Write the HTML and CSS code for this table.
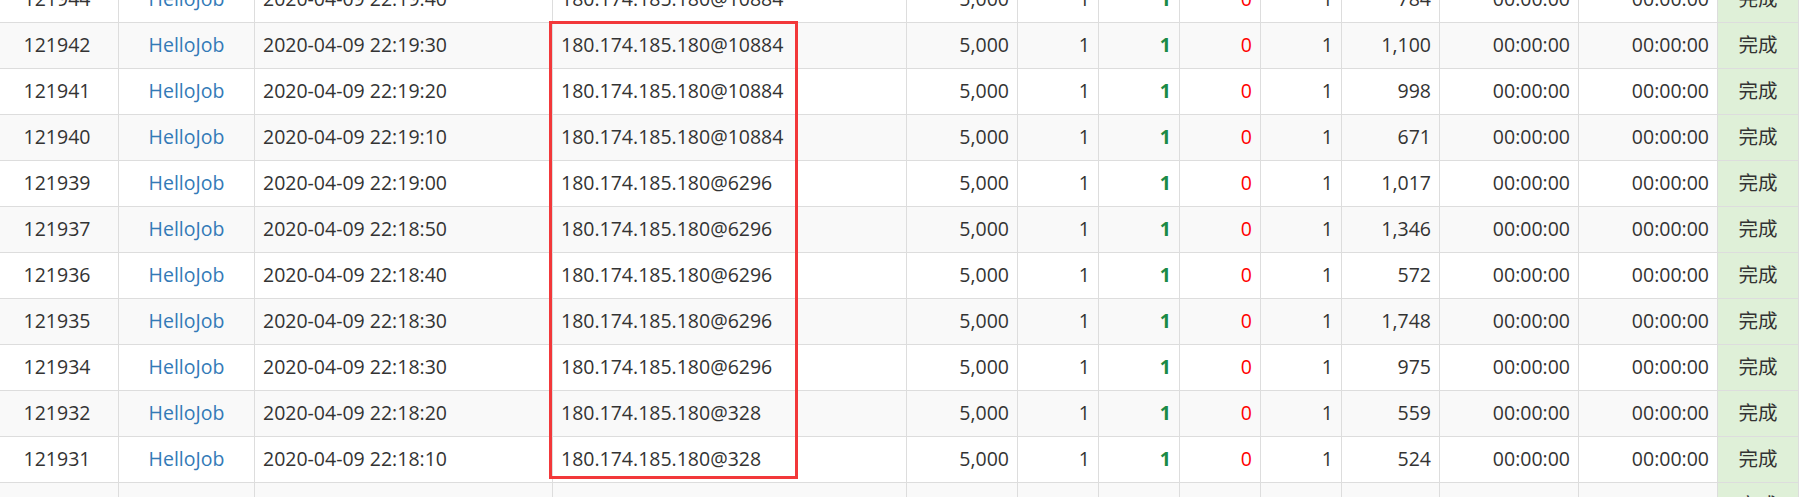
FILE: index.html
```html
<!DOCTYPE html>
<html lang="zh">
<head>
<meta charset="utf-8">
<title>Job log</title>
<link rel="stylesheet" href="styles.css">
</head>
<body>
<div class="viewport">
  <table class="log">
    <colgroup>
      <col class="c-id"><col class="c-job"><col class="c-time"><col class="c-addr"><col class="c-num">
      <col class="c-s"><col class="c-s"><col class="c-s"><col class="c-s"><col class="c-cost">
      <col class="c-dur"><col class="c-dur"><col class="c-state">
    </colgroup>
    <tbody>
      <tr><td class="ctr">121944</td><td class="ctr"><a href="#">HelloJob</a></td><td>2020-04-09 22:19:40</td><td>180.174.185.180@10884</td><td class="r">5,000</td><td class="r">1</td><td class="r ok">1</td><td class="r bad">0</td><td class="r">1</td><td class="r">784</td><td class="r">00:00:00</td><td class="r">00:00:00</td><td class="ctr done">完成</td></tr>
      <tr><td class="ctr">121942</td><td class="ctr"><a href="#">HelloJob</a></td><td>2020-04-09 22:19:30</td><td>180.174.185.180@10884</td><td class="r">5,000</td><td class="r">1</td><td class="r ok">1</td><td class="r bad">0</td><td class="r">1</td><td class="r">1,100</td><td class="r">00:00:00</td><td class="r">00:00:00</td><td class="ctr done">完成</td></tr>
      <tr><td class="ctr">121941</td><td class="ctr"><a href="#">HelloJob</a></td><td>2020-04-09 22:19:20</td><td>180.174.185.180@10884</td><td class="r">5,000</td><td class="r">1</td><td class="r ok">1</td><td class="r bad">0</td><td class="r">1</td><td class="r">998</td><td class="r">00:00:00</td><td class="r">00:00:00</td><td class="ctr done">完成</td></tr>
      <tr><td class="ctr">121940</td><td class="ctr"><a href="#">HelloJob</a></td><td>2020-04-09 22:19:10</td><td>180.174.185.180@10884</td><td class="r">5,000</td><td class="r">1</td><td class="r ok">1</td><td class="r bad">0</td><td class="r">1</td><td class="r">671</td><td class="r">00:00:00</td><td class="r">00:00:00</td><td class="ctr done">完成</td></tr>
      <tr><td class="ctr">121939</td><td class="ctr"><a href="#">HelloJob</a></td><td>2020-04-09 22:19:00</td><td>180.174.185.180@6296</td><td class="r">5,000</td><td class="r">1</td><td class="r ok">1</td><td class="r bad">0</td><td class="r">1</td><td class="r">1,017</td><td class="r">00:00:00</td><td class="r">00:00:00</td><td class="ctr done">完成</td></tr>
      <tr><td class="ctr">121937</td><td class="ctr"><a href="#">HelloJob</a></td><td>2020-04-09 22:18:50</td><td>180.174.185.180@6296</td><td class="r">5,000</td><td class="r">1</td><td class="r ok">1</td><td class="r bad">0</td><td class="r">1</td><td class="r">1,346</td><td class="r">00:00:00</td><td class="r">00:00:00</td><td class="ctr done">完成</td></tr>
      <tr><td class="ctr">121936</td><td class="ctr"><a href="#">HelloJob</a></td><td>2020-04-09 22:18:40</td><td>180.174.185.180@6296</td><td class="r">5,000</td><td class="r">1</td><td class="r ok">1</td><td class="r bad">0</td><td class="r">1</td><td class="r">572</td><td class="r">00:00:00</td><td class="r">00:00:00</td><td class="ctr done">完成</td></tr>
      <tr><td class="ctr">121935</td><td class="ctr"><a href="#">HelloJob</a></td><td>2020-04-09 22:18:30</td><td>180.174.185.180@6296</td><td class="r">5,000</td><td class="r">1</td><td class="r ok">1</td><td class="r bad">0</td><td class="r">1</td><td class="r">1,748</td><td class="r">00:00:00</td><td class="r">00:00:00</td><td class="ctr done">完成</td></tr>
      <tr><td class="ctr">121934</td><td class="ctr"><a href="#">HelloJob</a></td><td>2020-04-09 22:18:30</td><td>180.174.185.180@6296</td><td class="r">5,000</td><td class="r">1</td><td class="r ok">1</td><td class="r bad">0</td><td class="r">1</td><td class="r">975</td><td class="r">00:00:00</td><td class="r">00:00:00</td><td class="ctr done">完成</td></tr>
      <tr><td class="ctr">121932</td><td class="ctr"><a href="#">HelloJob</a></td><td>2020-04-09 22:18:20</td><td>180.174.185.180@328</td><td class="r">5,000</td><td class="r">1</td><td class="r ok">1</td><td class="r bad">0</td><td class="r">1</td><td class="r">559</td><td class="r">00:00:00</td><td class="r">00:00:00</td><td class="ctr done">完成</td></tr>
      <tr><td class="ctr">121931</td><td class="ctr"><a href="#">HelloJob</a></td><td>2020-04-09 22:18:10</td><td>180.174.185.180@328</td><td class="r">5,000</td><td class="r">1</td><td class="r ok">1</td><td class="r bad">0</td><td class="r">1</td><td class="r">524</td><td class="r">00:00:00</td><td class="r">00:00:00</td><td class="ctr done">完成</td></tr>
      <tr><td class="ctr">121930</td><td class="ctr"><a href="#">HelloJob</a></td><td>2020-04-09 22:18:00</td><td>180.174.185.180@328</td><td class="r">5,000</td><td class="r">1</td><td class="r ok">1</td><td class="r bad">0</td><td class="r">1</td><td class="r">613</td><td class="r">00:00:00</td><td class="r">00:00:00</td><td class="ctr done">完成</td></tr>
    </tbody>
  </table>
  <div class="mark"></div>
</div>
</body>
</html>
```

FILE: styles.css
```css
html, body {
  margin: 0;
  padding: 0;
  background: #fff;
}

.viewport {
  position: relative;
  width: 1799px;
  height: 497px;
  overflow: hidden;
}

.log {
  table-layout: fixed;
  border-collapse: collapse;
  width: 1804px;
  margin: -24px 0 0 -5px;
  font-family: "Open Sans", "Noto Sans CJK SC", sans-serif;
  font-size: 19.5px;
  line-height: 28px;
  color: #333;
}

.c-id { width: 123px; }
.c-job { width: 136px; }
.c-time { width: 298px; }
.c-addr { width: 354px; }
.c-num { width: 111px; }
.c-s { width: 81px; }
.c-cost { width: 98px; }
.c-dur { width: 139px; }
.c-state { width: 81px; }

.log tr { height: 46px; }
.log tr:nth-child(even) { background: #f9f9f9; }

.log td {
  border: 1px solid #ddd;
  padding: 7px 8px 9px;
  white-space: nowrap;
  overflow: hidden;
  vertical-align: middle;
}

.log td.ctr { text-align: center; }
.log td.r { text-align: right; }
.log td.ok { color: #1b8a46; font-weight: 700; }
.log td.bad { color: #ff0000; }
.log td.done { background: #dff0d8; }

.log a {
  color: #337ab7;
  text-decoration: none;
}

.mark {
  position: absolute;
  left: 549px;
  top: 21px;
  width: 243px;
  height: 452px;
  border: 3px solid #f2383a;
}
```
